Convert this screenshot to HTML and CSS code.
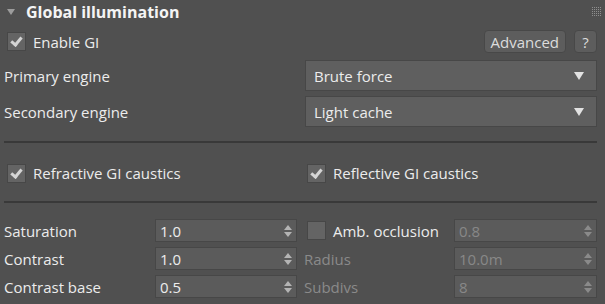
FILE: index.html
```html
<!DOCTYPE html>
<html>
<head>
<meta charset="utf-8">
<link rel="stylesheet" href="styles.css">
</head>
<body>
<div class="panel">
  <div class="header">
    <span class="tri"></span>
    <span class="title">Global illumination</span>
    <span class="grip"></span>
  </div>
  <div class="enable-row">
    <label class="chk-label"><span class="chk on"></span>Enable GI</label>
    <div class="buttons">
      <span class="btn">Advanced</span>
      <span class="btn q">?</span>
    </div>
  </div>
  <div class="engines">
    <span class="lbl">Primary engine</span>
    <div class="dropdown"><span>Brute force</span><span class="arrow"></span></div>
    <span class="lbl">Secondary engine</span>
    <div class="dropdown"><span>Light cache</span><span class="arrow"></span></div>
  </div>
  <div class="sep"></div>
  <div class="caustics">
    <label class="chk-label"><span class="chk on"></span>Refractive GI caustics</label>
    <label class="chk-label"><span class="chk on"></span>Reflective GI caustics</label>
  </div>
  <div class="sep sep2"></div>
  <div class="params">
    <span class="lbl">Saturation</span>
    <div class="spin"><span>1.0</span><span class="arrows"><i class="up"></i><i class="dn"></i></span></div>
    <label class="chk-label amb"><span class="chk"></span>Amb. occlusion</label>
    <div class="spin dis"><span>0.8</span><span class="arrows"><i class="up"></i><i class="dn"></i></span></div>

    <span class="lbl">Contrast</span>
    <div class="spin"><span>1.0</span><span class="arrows"><i class="up"></i><i class="dn"></i></span></div>
    <span class="lbl dis">Radius</span>
    <div class="spin dis"><span>10.0m</span><span class="arrows"><i class="up"></i><i class="dn"></i></span></div>

    <span class="lbl">Contrast base</span>
    <div class="spin"><span>0.5</span><span class="arrows"><i class="up"></i><i class="dn"></i></span></div>
    <span class="lbl dis">Subdivs</span>
    <div class="spin dis"><span>8</span><span class="arrows"><i class="up"></i><i class="dn"></i></span></div>
  </div>
</div>
</body>
</html>
```

FILE: styles.css
```css
html, body {
  margin: 0;
  padding: 0;
  background: #505050;
}
body {
  width: 605px;
  height: 304px;
  overflow: hidden;
  font-family: "Open Sans", "Noto Sans", sans-serif;
  font-size: 15px;
  color: #ececec;
}
.panel {
  padding: 0 8px 0 4px;
}
.header {
  height: 24px;
  display: flex;
  align-items: center;
}
.tri {
  width: 0;
  height: 0;
  margin-left: 3px;
  border-left: 4px solid transparent;
  border-right: 4px solid transparent;
  border-top: 6px solid #9c9c9c;
}
.title {
  margin-left: 11px;
  font-weight: bold;
  font-size: 16px;
  color: #f4f4f4;
}
.grip {
  margin-left: auto;
  margin-right: -4px;
  margin-top: -2px;
  width: 9px;
  height: 9px;
  background-color: #8e8e8e;
  background-image:
    linear-gradient(90deg, #505050 1px, transparent 1px),
    linear-gradient(#505050 1px, transparent 1px);
  background-size: 2px 2px;
  background-position: 1px 1px;
}
.enable-row {
  margin-top: 6px;
  height: 23px;
  display: flex;
  align-items: center;
  justify-content: space-between;
}
.chk-label {
  display: flex;
  align-items: center;
  padding-left: 3px;
  white-space: nowrap;
}
.chk {
  box-sizing: border-box;
  width: 19px;
  height: 19px;
  margin-right: 7px;
  background: #646464;
  border: 1px solid #474747;
  position: relative;
  flex: none;
}
.chk.on::after {
  content: "";
  position: absolute;
  left: 5px;
  top: 2px;
  width: 4px;
  height: 8px;
  border-right: 3px solid #d4d4d4;
  border-bottom: 3px solid #d4d4d4;
  transform: rotate(40deg);
}
.buttons {
  display: flex;
  gap: 8px;
}
.btn {
  box-sizing: border-box;
  height: 23px;
  padding: 0 6px;
  display: flex;
  align-items: center;
  background: #5d5d5d;
  border: 1px solid #484848;
  border-radius: 4px;
  font-size: 15px;
  color: #dcdcdc;
}
.btn.q {
  width: 23px;
  padding: 0;
  justify-content: center;
}
.engines {
  margin-top: 7px;
  display: grid;
  grid-template-columns: 301px 1fr;
  row-gap: 5px;
  align-items: center;
}
.lbl {
  white-space: nowrap;
}
.lbl.dis {
  color: #8a8a8a;
}
.dropdown {
  box-sizing: border-box;
  height: 31px;
  display: flex;
  align-items: center;
  justify-content: space-between;
  padding: 0 12px 0 8px;
  background: #5f5f5f;
  border: 1px solid #474747;
}
.arrow {
  width: 0;
  height: 0;
  border-left: 5px solid transparent;
  border-right: 5px solid transparent;
  border-top: 8px solid #e2e2e2;
}
.sep {
  margin-top: 14px;
  height: 2px;
  background: #393939;
}
.caustics {
  margin-top: 20px;
  height: 20px;
  display: grid;
  grid-template-columns: 300px 1fr;
  align-items: center;
}
.sep2 {
  margin-top: 18px;
}
.params {
  margin-top: 16px;
  display: grid;
  grid-template-columns: 151px 142px 157px 1fr;
  column-gap: 0;
  row-gap: 5px;
  align-items: center;
}
.params > :nth-child(4n+3) {
  margin-left: 7px;
}
.params > .amb {
  margin-left: 7px;
  padding-left: 3px;
}
.spin {
  box-sizing: border-box;
  height: 23px;
  display: flex;
  align-items: center;
  justify-content: space-between;
  padding: 0 4px 0 4px;
  background: #5b5b5b;
  border: 1px solid #474747;
  font-size: 15px;
  color: #ececec;
}
.spin.dis {
  color: #888888;
}
.arrows {
  display: flex;
  flex-direction: column;
  gap: 2px;
}
.arrows i {
  display: block;
  width: 0;
  height: 0;
  border-left: 4px solid transparent;
  border-right: 4px solid transparent;
}
.arrows .up {
  border-bottom: 5px solid #b4b4b4;
}
.arrows .dn {
  border-top: 5px solid #b4b4b4;
}
.spin.dis .arrows .up {
  border-bottom-color: #8a8a8a;
}
.spin.dis .arrows .dn {
  border-top-color: #8a8a8a;
}
```
